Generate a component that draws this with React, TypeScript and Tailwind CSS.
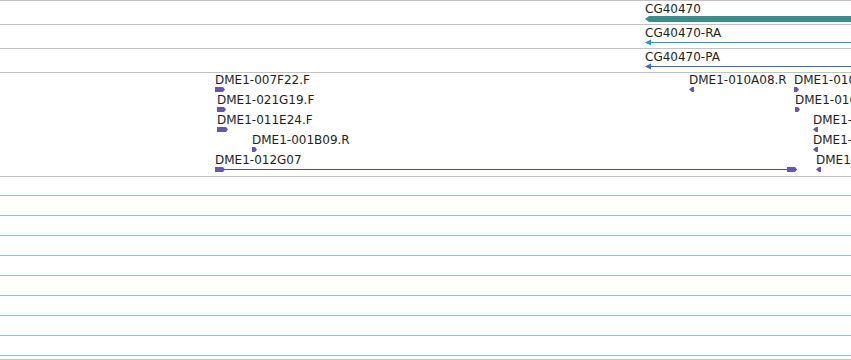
type Feat = {
  label: string;
  x: number;
  row: number;
  dir: 'r' | 'l';
  w: number;
  lineTo?: number;
};

// feature positions on the track canvas (genome coordinates -> px)
const feats: Feat[] = [
  { label: 'DME1-007F22.F', x: 215, row: 0, dir: 'r', w: 10 },
  { label: 'DME1-021G19.F', x: 217, row: 1, dir: 'r', w: 9 },
  { label: 'DME1-011E24.F', x: 217, row: 2, dir: 'r', w: 11 },
  { label: 'DME1-001B09.R', x: 252, row: 3, dir: 'r', w: 5 },
  { label: 'DME1-012G07', x: 215, row: 4, dir: 'r', w: 10, lineTo: 797 },
  { label: 'DME1-010A08.R', x: 689, row: 0, dir: 'l', w: 5 },
  { label: 'DME1-010', x: 794, row: 0, dir: 'r', w: 5 },
  { label: 'DME1-010', x: 795, row: 1, dir: 'r', w: 5 },
  { label: 'DME1-001', x: 813, row: 2, dir: 'l', w: 5 },
  { label: 'DME1-001', x: 813, row: 3, dir: 'l', w: 5 },
  { label: 'DME1-001', x: 816, row: 4, dir: 'l', w: 5 },
];

function Arrow({ dir, w, color }: { dir: 'r' | 'l'; w: number; color: string }) {
  const pts =
    dir === 'r'
      ? `0,0 ${w - 2},0 ${w},2.5 ${w - 2},5 0,5`
      : `0,2.5 3,0 ${w},0 ${w},5 3,5`;
  return (
    <svg width={w} height={5} className="block">
      <polygon points={pts} fill={color} />
    </svg>
  );
}

function GeneTrack({ label, children }: { label: string; children: React.ReactNode }) {
  return (
    <div className="relative h-[24px] border-b border-[#c2c2c2]">
      <span className="absolute left-[645px] top-px leading-[14px] whitespace-nowrap">{label}</span>
      {children}
    </div>
  );
}

export default function App() {
  return (
    <div className="flex flex-col w-[851px] h-[360px] overflow-hidden bg-white font-['DejaVu_Sans',sans-serif] text-[12px] text-[#1e1e1e]">
      <div className="h-px shrink-0 bg-[#c2c2c2]" />
      <GeneTrack label="CG40470">
        <svg width={206} height={6} className="absolute left-[645px] top-[15px]">
          <polygon points="0,3 4,0 206,0 206,6 4,6" fill="#3b8e8e" />
        </svg>
      </GeneTrack>
      <GeneTrack label="CG40470-RA">
        <svg width={206} height={7} className="absolute left-[645px] top-[14px]">
          <polygon points="0,3.5 6,0.5 6,6.5" fill="#1aa0c2" />
          <rect x={5} y={3} width={201} height={1} fill="#1aa0c2" />
        </svg>
      </GeneTrack>
      <GeneTrack label="CG40470-PA">
        <svg width={206} height={7} className="absolute left-[645px] top-[14px]">
          <polygon points="0,3.5 6,0.5 6,6.5" fill="#3a6cc4" />
          <rect x={5} y={3} width={201} height={1} fill="#3a6cc4" />
        </svg>
      </GeneTrack>
      <div className="relative h-[104px] shrink-0 overflow-hidden border-b border-[#c2c2c2]">
        {feats.map((f) => (
          <div key={f.label + f.x + f.row}>
            <span
              className="absolute leading-[14px] whitespace-nowrap"
              style={{ left: f.x, top: f.row * 20 }}
            >
              {f.label}
            </span>
            {f.lineTo && (
              <div
                className="absolute h-px bg-[#5a4c9c]"
                style={{ left: f.x, top: 16 + f.row * 20, width: f.lineTo - f.x }}
              />
            )}
            <div className="absolute" style={{ left: f.x, top: 14 + f.row * 20 }}>
              <Arrow dir={f.dir} w={f.w} color="#6a55ad" />
            </div>
            {f.lineTo && (
              <div className="absolute" style={{ left: f.lineTo - 10, top: 14 + f.row * 20 }}>
                <Arrow dir="r" w={10} color="#6a55ad" />
              </div>
            )}
          </div>
        ))}
      </div>
      <div className="h-[19px] shrink-0 border-b border-[#95bddb]" />
      {Array.from({ length: 8 }).map((_, i) => (
        <div key={i} className="h-[20px] shrink-0 border-b border-[#95bddb]" />
      ))}
      <div className="h-[4px] shrink-0 border-b border-[#c2c2c2]" />
    </div>
  );
}
